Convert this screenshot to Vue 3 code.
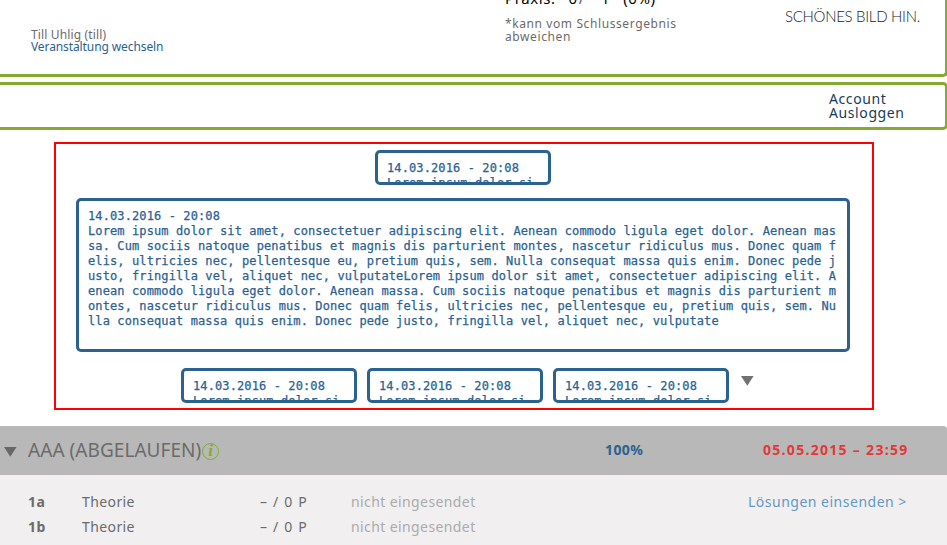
<script setup>
const stamp = '14.03.2016 - 20:08'
const sentence =
  'Lorem ipsum dolor sit amet, consectetuer adipiscing elit. Aenean commodo ligula eget dolor. Aenean massa. Cum sociis natoque penatibus et magnis dis parturient montes, nascetur ridiculus mus. Donec quam felis, ultricies nec, pellentesque eu, pretium quis, sem. Nulla consequat massa quis enim. Donec pede justo, fringilla vel, aliquet nec, vulputate'
const body = sentence + sentence
const preview = 'Lorem ipsum dolor si'
const tasks = ['1a', '1b']
</script>

<template>
  <div class="page">
    <header class="panel head">
      <div class="user">
        <div><span class="name">Till Uhlig (till)</span></div>
        <a class="switch">Veranstaltung wechseln</a>
      </div>
      <div class="score">
        <div class="praxis"><span>Praxis:</span><span>0</span><span class="slash">/</span><span>1</span><span>(0%)</span></div>
        <div class="hint">*kann vom Schlussergebnis<br />abweichen</div>
      </div>
      <div class="picture">SCHÖNES BILD HIN.</div>
    </header>

    <nav class="panel menu">
      <a>Account</a>
      <a>Ausloggen</a>
    </nav>

    <section class="notes">
      <div class="note small first">{{ stamp }}<br />{{ preview }}</div>
      <div class="note big">{{ stamp }}<br />{{ body }}</div>
      <div class="row">
        <div v-for="n in 3" :key="n" class="note small">{{ stamp }}<br />{{ preview }}</div>
        <svg class="more" width="13" height="10" viewBox="0 0 13 10"><path d="M0 0H12.6L6.3 9.8Z" fill="#717171" /></svg>
      </div>
    </section>

    <section class="sheet">
      <div class="bar">
        <svg class="fold" width="13" height="10" viewBox="0 0 13 10"><path d="M0 0H12.6L6.3 9.8Z" fill="#686868" /></svg>
        <h2>AAA (ABGELAUFEN)</h2>
        <span class="info">i</span>
        <span class="percent">100%</span>
        <span class="date">05.05.2015 – 23:59</span>
      </div>
      <div class="tasks">
        <div v-for="(t, i) in tasks" :key="t" class="task">
          <b>{{ t }}</b>
          <span>Theorie</span>
          <span class="points">– / 0 P</span>
          <span class="state">nicht eingesendet</span>
          <a v-if="i === 0" class="send">Lösungen einsenden &gt;</a>
        </div>
      </div>
    </section>
  </div>
</template>

<style>
body { margin: 0; background: #fff; overflow: hidden; }
</style>

<style scoped>
.page { width: 948px; height: 545px; overflow: hidden; font-family: "Noto Sans", sans-serif; color: #6b6b6b; }
.panel { box-sizing: border-box; border: 3px solid #84ab2f; border-left: 0; background: #fff; }
.head { height: 77px; border-top: 0; border-radius: 0 0 5px 0; display: grid; grid-template-columns: 505px 280px 1fr; overflow: hidden; }
.user { padding: 29px 0 0 31px; font-size: 12px; line-height: 12px; white-space: nowrap; }
.name { letter-spacing: .15px; }
.switch { display: block; color: #2b6290; letter-spacing: -0.1px; }
.score { font-size: 12px; }
.praxis { display: flex; height: 8px; line-height: 20px; align-items: flex-end; color: #000; font-size: 15px; letter-spacing: .6px; gap: 13px; }
.praxis .slash { color: #555; margin-left: -12px; margin-right: 3px; }
.hint { padding-top: 9px; line-height: 13px; letter-spacing: .6px; white-space: nowrap; }
.picture { font: 300 15px/18px Lato, sans-serif; color: #222; padding-top: 7px; letter-spacing: -.3px; white-space: nowrap; }
.menu { height: 48px; margin-top: 5px; border-radius: 0 5px 5px 0; padding: 7px 0 0 829px; font-size: 14px; line-height: 14px; color: #173c5c; letter-spacing: .6px; }
.menu a { display: block; }
.notes { box-sizing: border-box; width: 820px; height: 268px; margin: 12px 0 0 54px; border: 2px solid #f00; padding: 6px 20px 0; }
.note { box-sizing: border-box; border: 3px solid #2b6290; border-radius: 5px; padding: 8px 6px 0 9px; font: 12px/15px "DejaVu Sans Mono", monospace; letter-spacing: .11px; color: #2b6290; -webkit-text-stroke: .25px #2b6290; overflow: hidden; word-break: break-all; }
.small { width: 176px; height: 35px; white-space: nowrap; }
.first { margin-left: 299px; }
.big { height: 154px; width: 774px; margin-top: 13px; }
.row { display: flex; gap: 10px; margin: 16px 0 0 105px; }
.more { margin: 8px 0 0 2px; }
.sheet { margin-top: 16px; }
.bar { height: 49px; background: #b8b8b8; border-radius: 0 5px 0 0; display: grid; grid-template-columns: 28px 174px 403px 158px 1fr; align-items: center; }
.fold { margin: 2px 0 0 4px; }
h2 { margin: -2px 0 0; font-size: 19px; font-weight: 400; letter-spacing: .05px; white-space: nowrap; }
.info { box-sizing: border-box; width: 17px; height: 17px; border: 1px solid #84ab2f; border-radius: 50%; margin-top: 2px; color: #84ab2f; font: italic bold 17px/14px "Liberation Serif", serif; text-align: center; }
.percent, .date { font-size: 14px; font-weight: 700; white-space: nowrap; margin-top: -2px; }
.percent { color: #2b6290; letter-spacing: .4px; }
.date { color: #e23838; letter-spacing: 1.3px; }
.tasks { height: 80px; background: #f1eff0; padding: 14px 0 0 28px; box-sizing: border-box; }
.task { display: grid; grid-template-columns: 54px 178px 91px 397px 1fr; height: 25px; line-height: 25px; font-size: 14px; letter-spacing: .4px; white-space: nowrap; }
.points { letter-spacing: 1.2px; }
.state { color: #ababab; }
.send { color: #6399c5; letter-spacing: .5px; }
</style>
